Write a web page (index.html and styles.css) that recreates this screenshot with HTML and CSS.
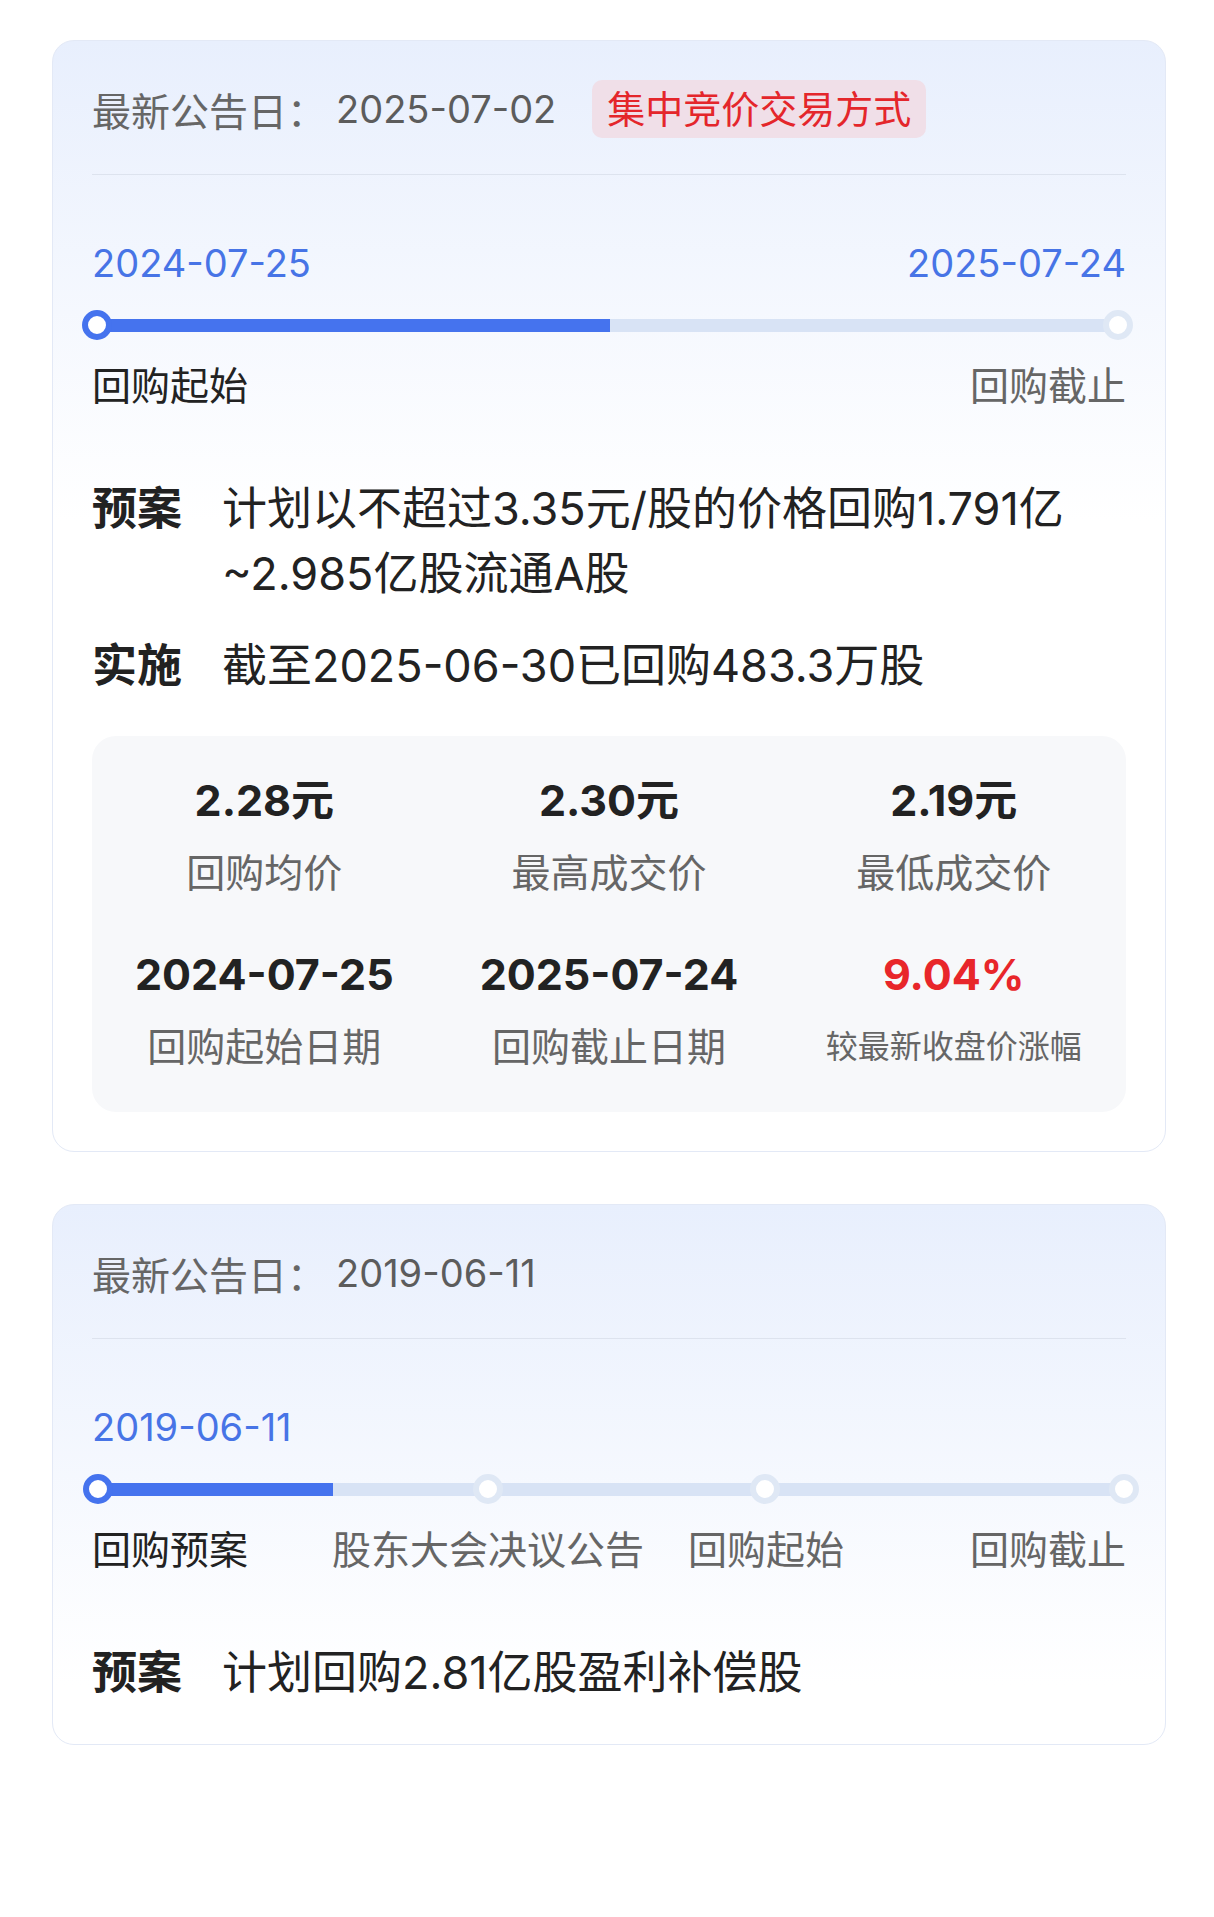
FILE: index.html
```html
<!DOCTYPE html>
<html lang="zh-CN">
<head>
  <meta charset="UTF-8" />
  <meta name="viewport" content="width=device-width, initial-scale=1.0" />
  <title>回购进度</title>
  <link rel="stylesheet" href="styles.css">
</head>
<body>
  <div class="page">

    <div class="card">
      <div class="card-head">
        <span class="head-label">最新公告日：</span>
        <span class="head-date">2025-07-02</span>
        <span class="tag">集中竞价交易方式</span>
      </div>

      <div class="dates">
        <span>2024-07-25</span>
        <span>2025-07-24</span>
      </div>
      <div class="track">
        <div class="track-line" style="left: 5px; width: 1021px;"></div>
        <div class="track-fill" style="left: 5px; width: 513px;"></div>
        <span class="node active" style="left: 5px;"></span>
        <span class="node" style="left: 1026px;"></span>
      </div>
      <div class="steps">
        <span class="step done">回购起始</span>
        <span class="step">回购截止</span>
      </div>

      <div class="info">
        <span class="info-label">预案</span>
        <span class="info-text">计划以不超过3.35元/股的价格回购1.791亿~2.985亿股流通A股</span>
        <span class="info-label">实施</span>
        <span class="info-text">截至2025-06-30已回购483.3万股</span>
      </div>

      <div class="stats">
        <div class="stat">
          <div class="stat-value">2.28元</div>
          <div class="stat-label">回购均价</div>
        </div>
        <div class="stat">
          <div class="stat-value">2.30元</div>
          <div class="stat-label">最高成交价</div>
        </div>
        <div class="stat">
          <div class="stat-value">2.19元</div>
          <div class="stat-label">最低成交价</div>
        </div>
        <div class="stat">
          <div class="stat-value">2024-07-25</div>
          <div class="stat-label">回购起始日期</div>
        </div>
        <div class="stat">
          <div class="stat-value">2025-07-24</div>
          <div class="stat-label">回购截止日期</div>
        </div>
        <div class="stat">
          <div class="stat-value up">9.04%</div>
          <div class="stat-label small">较最新收盘价涨幅</div>
        </div>
      </div>
    </div>

    <div class="card">
      <div class="card-head">
        <span class="head-label">最新公告日：</span>
        <span class="head-date">2019-06-11</span>
      </div>

      <div class="dates">
        <span>2019-06-11</span>
      </div>
      <div class="track">
        <div class="track-line" style="left: 6px; width: 1026px;"></div>
        <div class="track-fill" style="left: 6px; width: 235px;"></div>
        <span class="node active" style="left: 6px;"></span>
        <span class="node" style="left: 396px;"></span>
        <span class="node" style="left: 673px;"></span>
        <span class="node" style="left: 1032px;"></span>
      </div>
      <div class="steps">
        <span class="step done">回购预案</span>
        <span class="step mid" style="left: 396px;">股东大会决议公告</span>
        <span class="step mid" style="left: 674px;">回购起始</span>
        <span class="step">回购截止</span>
      </div>

      <div class="info">
        <span class="info-label">预案</span>
        <span class="info-text">计划回购2.81亿股盈利补偿股</span>
      </div>
    </div>

  </div>
</body>
</html>
```

FILE: styles.css
```css
body {
  margin: 0;
  background: #fff;
  font-family: "Inter", "Noto Sans CJK SC", sans-serif;
  color: #222;
}

.page {
  padding: 40px 48px 0 52px;
  display: flex;
  flex-direction: column;
  gap: 52px;
}

.card {
  border: 1px solid #e3e9f6;
  border-radius: 22px;
  background: linear-gradient(180deg, #e8effd 0, #ffffff 480px);
  padding: 39px;
}

.card-head {
  display: flex;
  align-items: center;
  height: 58px;
  padding-bottom: 36px;
  border-bottom: 1px solid #dde3ee;
  font-size: 39px;
  color: #666;
}

.head-label {
  margin-right: 10px;
}

.head-date {
  font-size: 38px;
  color: #5c5c5c;
}

.tag {
  margin-left: 36px;
  padding: 0 15px;
  height: 58px;
  line-height: 58px;
  border-radius: 10px;
  background: #f0dfe8;
  color: #e4262b;
  font-size: 38px;
}

.dates {
  display: flex;
  justify-content: space-between;
  margin-top: 64px;
  font-size: 38px;
  line-height: 48px;
  color: #4774e6;
}

.track {
  position: relative;
  height: 30px;
  margin-top: 23px;
}

.track-line,
.track-fill {
  position: absolute;
  top: 9px;
  height: 13px;
}

.track-line {
  background: #d8e3f5;
}

.track-fill {
  background: #4573ee;
}

.node {
  position: absolute;
  top: 0;
  width: 30px;
  height: 30px;
  margin-left: -15px;
  box-sizing: border-box;
  border: 6px solid #dfe8f5;
  border-radius: 50%;
  background: #fff;
}

.node.active {
  border-color: #4573ee;
}

.steps {
  position: relative;
  display: flex;
  justify-content: space-between;
  margin-top: 22px;
  font-size: 39px;
  line-height: 48px;
  color: #666;
}

.step.done {
  color: #222;
}

.step.mid {
  position: absolute;
  top: 0;
  transform: translateX(-50%);
  white-space: nowrap;
}

.info {
  display: grid;
  grid-template-columns: auto 1fr;
  column-gap: 40px;
  row-gap: 27px;
  margin-top: 66px;
  font-size: 45px;
  line-height: 65px;
}

.info-label {
  font-weight: bold;
}

.stats {
  display: grid;
  grid-template-columns: repeat(3, 1fr);
  row-gap: 47px;
  margin-top: 38px;
  padding: 36px 0 39px;
  border-radius: 24px;
  background: #f7f8fa;
  text-align: center;
}

.stat-value {
  font-size: 43px;
  line-height: 56px;
  font-weight: bold;
  color: #222;
}

.stat-value.up {
  color: #e8262a;
}

.stat-label {
  margin-top: 19px;
  font-size: 39px;
  line-height: 52px;
  color: #666;
}

.stat-label.small {
  font-size: 32px;
}
```
